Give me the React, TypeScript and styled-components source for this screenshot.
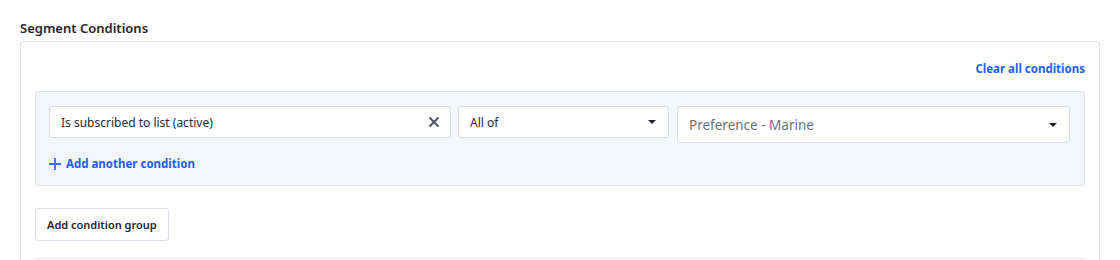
import React from "react";
import styled, { createGlobalStyle } from "styled-components";

const GlobalStyle = createGlobalStyle`
  body {
    margin: 0;
    background: #ffffff;
    font-family: "Noto Sans", "Liberation Sans", sans-serif;
    color: #232733;
  }
`;

const Page = styled.div`
  padding: 19px 20px 0 20px;
  height: 260px;
  box-sizing: border-box;
  overflow: hidden;
`;

const Heading = styled.h2`
  margin: 0 0 4px 0;
  font-size: 13px;
  font-weight: 600;
  line-height: 18px;
  color: #1f2430;
`;

const Card = styled.div`
  width: 1080px;
  box-sizing: border-box;
  border: 1px solid #dcdee8;
  border-radius: 4px;
  padding: 18px 14px 0 14px;
  display: flex;
  flex-direction: column;
`;

const TopBar = styled.div`
  display: flex;
  justify-content: flex-end;
  margin-bottom: 13px;
`;

const LinkButton = styled.button`
  background: none;
  border: none;
  padding: 0;
  font-family: inherit;
  font-size: 11.5px;
  font-weight: 700;
  line-height: 18px;
  color: #1f5eff;
  cursor: pointer;
  display: inline-flex;
  align-items: center;
  gap: 5px;
`;

const Group = styled.div`
  background: #f3f6fd;
  border: 1px solid #dde0ec;
  border-radius: 3px;
  padding: 14px 14px 12px 13px;
`;

const Row = styled.div`
  display: flex;
  align-items: flex-start;
  gap: 7px;
`;

const Field = styled.div<{ $width: number; $height: number }>`
  width: ${(p) => p.$width}px;
  height: ${(p) => p.$height}px;
  box-sizing: border-box;
  background: #ffffff;
  border: 1px solid #d9dce8;
  border-radius: 3px;
  display: flex;
  align-items: center;
  justify-content: space-between;
  padding: 0 10px 0 11px;
  flex-shrink: 0;
`;

const FieldText = styled.span<{ $muted?: boolean; $size: number }>`
  font-size: ${(p) => p.$size}px;
  color: ${(p) => (p.$muted ? "#6b7180" : "#262a35")};
  white-space: nowrap;
`;

const Caret = styled.span`
  width: 0;
  height: 0;
  border-left: 4.5px solid transparent;
  border-right: 4.5px solid transparent;
  border-top: 4.5px solid #1c1f26;
  margin-right: 2px;
`;

const AddRow = styled.div`
  margin-top: 12px;
  display: flex;
`;

const Footer = styled.div`
  padding: 22px 0 17px 0;
`;

const GroupButton = styled.button`
  height: 33px;
  padding: 0 11px;
  background: #ffffff;
  border: 1px solid #d9dce8;
  border-radius: 3px;
  font-family: inherit;
  font-size: 11px;
  font-weight: 600;
  color: #1f2430;
`;

const NextBlock = styled.div`
  height: 20px;
  border-top: 1px solid #e6e8f0;
  background: #fafbfd;
`;

const ClearIcon = () => (
  <svg width="12" height="12" viewBox="0 0 12 12">
    <path d="M1.5 1.5 L10.5 10.5 M10.5 1.5 L1.5 10.5" stroke="#4a4f5c" strokeWidth="1.9" />
  </svg>
);

const PlusIcon = () => (
  <svg width="12" height="12" viewBox="0 0 12 12">
    <path d="M6 0 V12 M0 6 H12" stroke="#3b6cff" strokeWidth="1.8" />
  </svg>
);

const App: React.FC = () => {
  return (
    <>
      <GlobalStyle />
      <Page>
        <Heading>Segment Conditions</Heading>
        <Card>
          <TopBar>
            <LinkButton>Clear all conditions</LinkButton>
          </TopBar>
          <Group>
            <Row>
              <Field $width={402} $height={32}>
                <FieldText $size={12}>Is subscribed to list (active)</FieldText>
                <ClearIcon />
              </Field>
              <Field $width={211} $height={32}>
                <FieldText $size={12}>All of</FieldText>
                <Caret />
              </Field>
              <Field $width={393} $height={37} style={{ marginLeft: 1 }}>
                <FieldText $size={13.5} $muted>
                  Preference - Marine
                </FieldText>
                <Caret />
              </Field>
            </Row>
            <AddRow>
              <LinkButton>
                <PlusIcon />
                Add another condition
              </LinkButton>
            </AddRow>
          </Group>
          <Footer>
            <GroupButton>Add condition group</GroupButton>
          </Footer>
          <NextBlock />
        </Card>
      </Page>
    </>
  );
};

export default App;
